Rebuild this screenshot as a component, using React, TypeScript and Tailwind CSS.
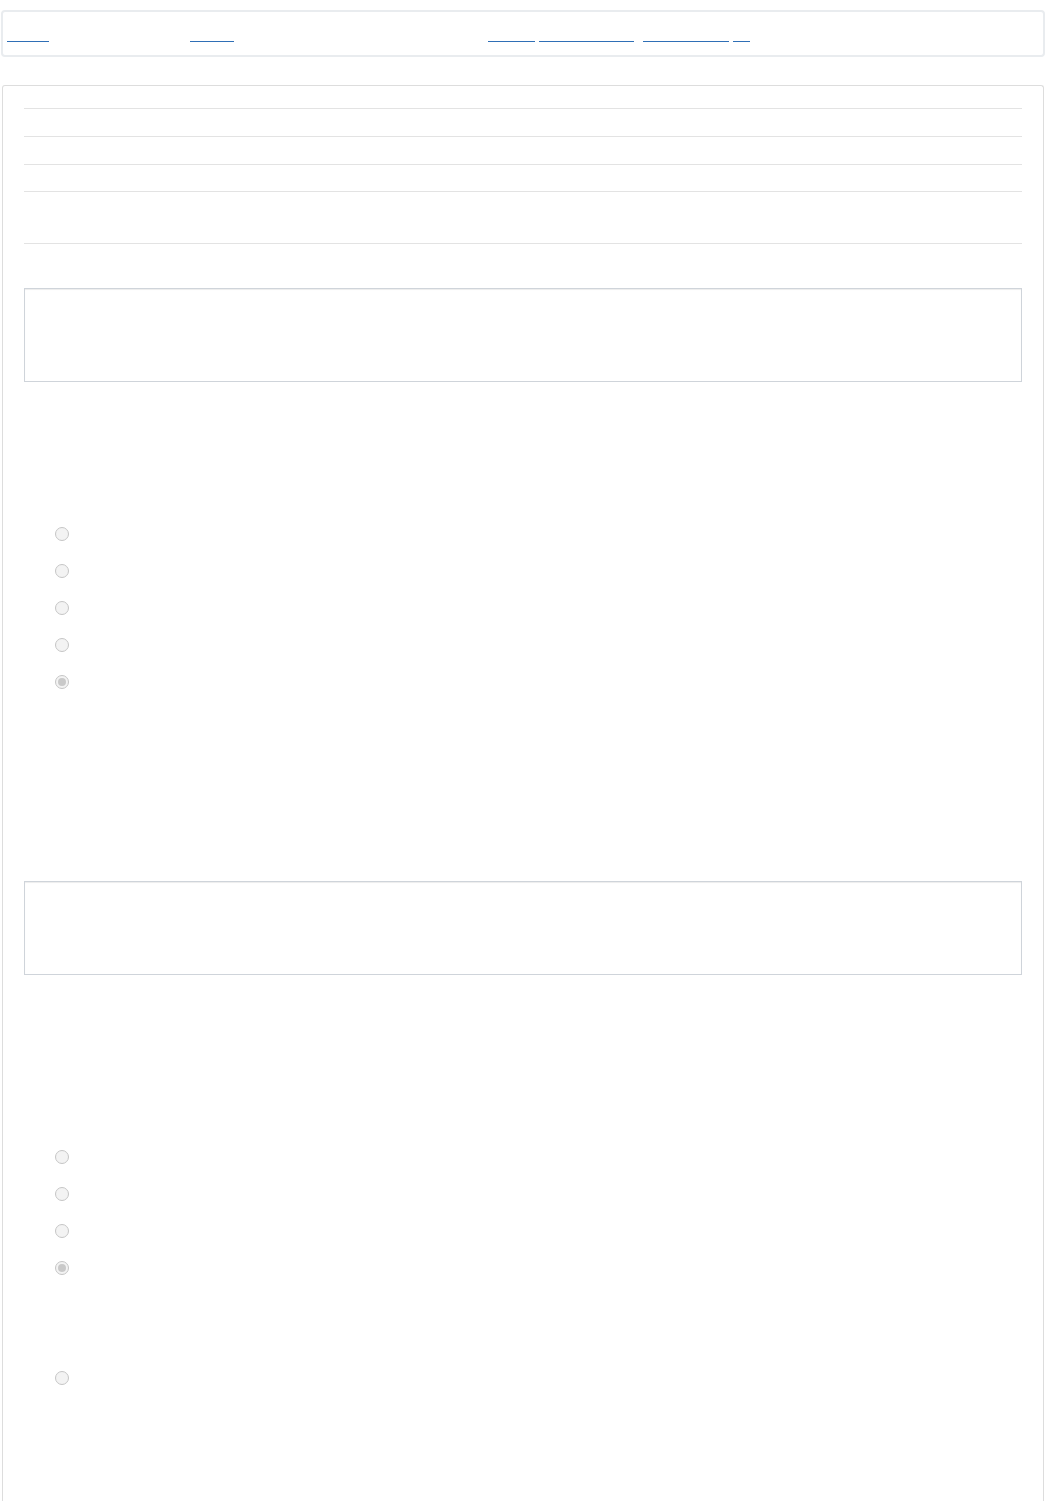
import React from 'react';

type RadioProps = { checked?: boolean };

function Radio({ checked = false }: RadioProps) {
  return (
    <div className="flex h-[37px] items-center">
      <span className="ml-[31px] flex h-[14px] w-[14px] items-center justify-center rounded-full border border-[#c6c6c6] bg-[#f3f3f3]">
        {checked && <span className="h-[8px] w-[8px] rounded-full bg-[#c9c9c9]" />}
      </span>
    </div>
  );
}

function Box() {
  return (
    <div className="h-[94px] w-full border border-[#cfd4da] bg-white shadow-[inset_0_1px_1px_rgba(0,0,0,0.075)]" />
  );
}

const navLinks = [
  { width: 'w-[42px]', margin: 'ml-[4px]' },
  { width: 'w-[44px]', margin: 'ml-[141px]' },
  { width: 'w-[47px]', margin: 'ml-[254px]' },
  { width: 'w-[95px]', margin: 'ml-[4px]' },
  { width: 'w-[86px]', margin: 'ml-[9px]' },
  { width: 'w-[17px]', margin: 'ml-[4px]' },
];

export default function App() {
  return (
    <div className="min-h-[1501px] bg-white font-['Liberation_Sans',sans-serif]">
      {/* top nav */}
      <nav className="ml-[1px] mr-[2px] mt-[10px] flex h-[47px] items-start rounded-[4px] border-2 border-[#e9ecef] pt-[29px]">
        {navLinks.map((link, i) => (
          <a key={i} href="#" className={`block h-px bg-[#2f6fb6] ${link.width} ${link.margin}`} />
        ))}
      </nav>

      {/* main panel */}
      <div className="ml-[2px] mr-[3px] mt-[28px] rounded-t-[3px] border border-b-0 border-[#dddddd] px-[21px] pb-[130px] pt-[22px]">
        <div className="h-[28px] border-t border-[#e3e3e3]" />
        <div className="h-[28px] border-t border-[#e3e3e3]" />
        <div className="h-[27px] border-t border-[#e3e3e3]" />
        <div className="h-[52px] border-t border-[#e3e3e3]" />
        <div className="border-t border-[#e3e3e3]" />

        <div className="mt-[44px]">
          <Box />
        </div>

        <div className="mt-[133px]">
          <Radio />
          <Radio />
          <Radio />
          <Radio />
          <Radio checked />
        </div>

        <div className="mt-[181px]">
          <Box />
        </div>

        <div className="mt-[163px]">
          <Radio />
          <Radio />
          <Radio />
          <Radio checked />
          <div className="h-[73px]" />
          <Radio />
        </div>
      </div>
    </div>
  );
}
